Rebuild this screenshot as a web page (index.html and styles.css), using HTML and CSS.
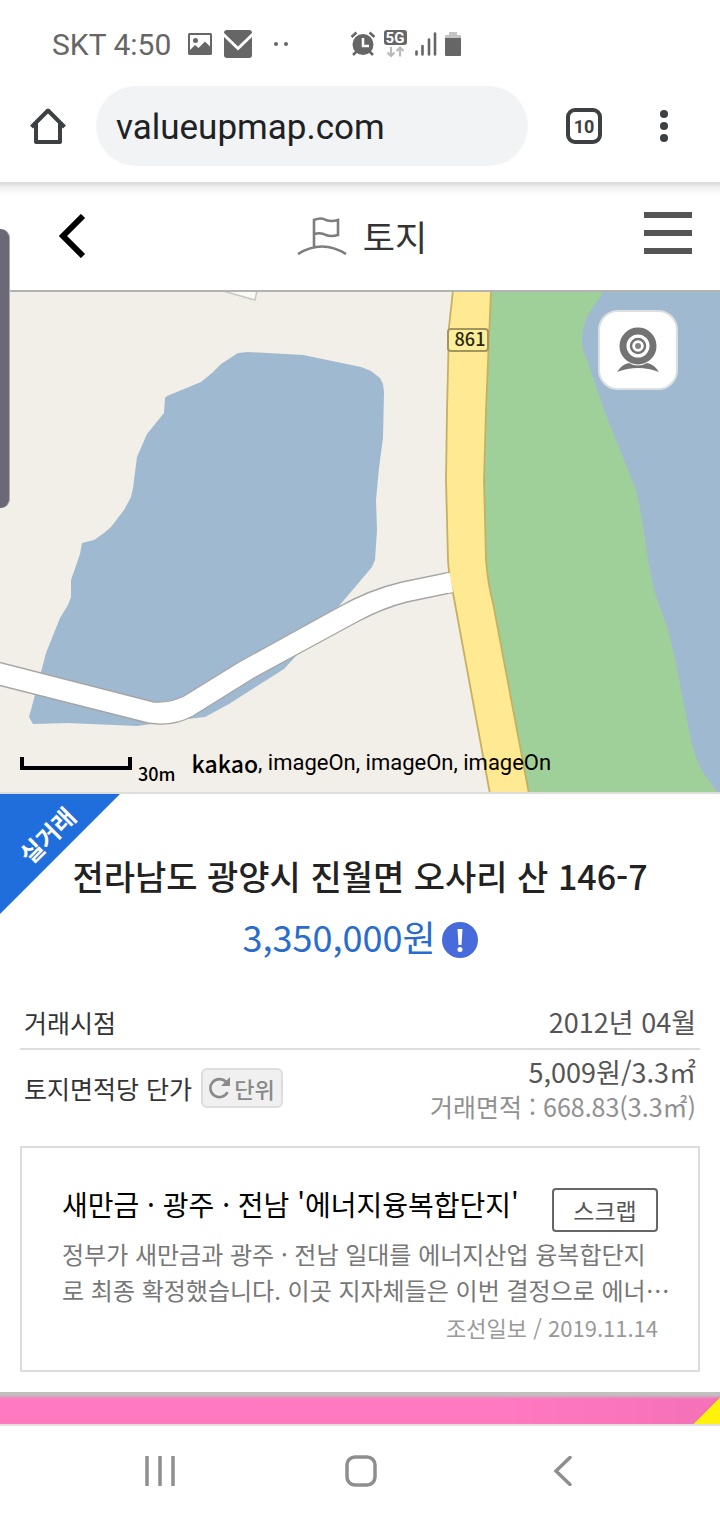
FILE: index.html
```html
<!DOCTYPE html>
<html lang="ko">
<head>
  <meta charset="UTF-8">
  <meta name="viewport" content="width=device-width, initial-scale=1.0">
  <title>토지</title>
  <link rel="stylesheet" href="styles.css">
</head>
<body>

<!-- STATUS BAR -->
<div class="status-bar">
  <span class="carrier">SKT 4:50</span>
  <div class="notice-icons">
    <svg width="24" height="22" viewBox="0 0 24 22"><path fill="#666" fill-rule="evenodd" d="M1.500 0h21a1.500 1.500 0 0 1 1.500 1.500v19a1.500 1.500 0 0 1-1.500 1.500h-21a1.500 1.500 0 0 1-1.500-1.500v-19a1.500 1.500 0 0 1 1.500-1.500zM2 2v15l5-5 3.500 3 6.500-6.500 5 5V2z"/><circle cx="7.500" cy="7.500" r="2.500" fill="#666"/></svg>
    <svg width="28" height="28" viewBox="0 0 28 28"><rect width="28" height="28" rx="3" fill="#666"/><path d="M-1 4l15 14.500L29 4" fill="none" stroke="#fff" stroke-width="3"/></svg>
    <svg class="more-dots" width="14" height="4" viewBox="0 0 14 4"><circle cx="2" cy="2" r="2" fill="#666"/><circle cx="12" cy="2" r="2" fill="#666"/></svg>
  </div>
  <div class="signal-icons">
    <svg width="26" height="26" viewBox="0 0 26 26"><circle cx="13" cy="13.500" r="10.500" fill="#666"/><path d="M1.500 6l5-4.500M24.500 6l-5-4.500M3 24l3.500-3.500M23 24l-3.500-3.500" stroke="#666" stroke-width="2.500"/><path d="M13 7v8h6" fill="none" stroke="#fff" stroke-width="2.500"/></svg>
    <svg width="23" height="28" viewBox="0 0 23 28"><rect width="23" height="15" rx="3" fill="#666"/><text class="five-g" x="11" y="13" text-anchor="middle">5G</text><path d="M7 17v9M3.500 22.500L7 26l3.500-3.500M16 26.500v-9M12.500 21l3.500-3.500 3.500 3.500" fill="none" stroke="#bbb" stroke-width="2.200"/></svg>
    <svg width="22" height="24" viewBox="0 0 22 24"><path d="M1.500 19.500v3M7.500 14v8.500M14 7.500v15M20 1.500v21" stroke="#666" stroke-width="2.600" stroke-linecap="round"/></svg>
    <svg width="16" height="24" viewBox="0 0 16 24"><path d="M4 0h8v3h3a1 1 0 0 1 1 1v3H0V4a1 1 0 0 1 1-1h3z" fill="#c4c4c4"/><path d="M0 6h16v17a1 1 0 0 1-1 1H1a1 1 0 0 1-1-1z" fill="#666"/></svg>
  </div>
</div>

<!-- BROWSER BAR -->
<div class="browser-bar">
  <button type="button" class="icon-button" aria-label="홈">
    <svg width="36" height="36" viewBox="0 0 36 36"><path d="M1.500 19L18 2.500 34.500 19M6 15.500V34h24V15.500" fill="none" stroke="#3c4043" stroke-width="4" stroke-linejoin="round"/></svg>
  </button>
  <input class="url" type="text" value="valueupmap.com" aria-label="주소">
  <button type="button" class="tab-count">10</button>
  <button type="button" class="icon-button" aria-label="더보기">
    <svg width="8" height="32" viewBox="0 0 8 32"><g fill="#3c4043"><circle cx="4" cy="4" r="4"/><circle cx="4" cy="16" r="4"/><circle cx="4" cy="28" r="4"/></g></svg>
  </button>
</div>

<!-- PAGE HEADER -->
<header class="page-header">
  <button type="button" class="icon-button" aria-label="뒤로">
    <svg width="28" height="44" viewBox="0 0 28 44"><path d="M25 2L5 22l20 20" fill="none" stroke="#000" stroke-width="6"/></svg>
  </button>
  <h1>
    <svg width="50" height="38" viewBox="0 0 50 38"><path d="M1 37Q25 22 49 37M17 30V3q7-3 12 0 5 2 12 0v15q-7 2-12 0-5-3-12-1" fill="none" stroke="#7d7d7d" stroke-width="2.600"/></svg>
    토지
  </h1>
  <button type="button" class="icon-button" aria-label="메뉴">
    <svg width="48" height="44" viewBox="0 0 48 44"><path d="M0 3h48M0 21h48M0 39h48" stroke="#555" stroke-width="6"/></svg>
  </button>
</header>

<!-- MAP -->
<div class="map">
  <svg class="map-canvas" viewBox="0 292 720 500" preserveAspectRatio="xMidYMid slice">
    <rect y="292" width="720" height="500" fill="#f2efe8"/>
    <path d="M223 291L255 300L257 291" fill="#fafaf8" stroke="#c8c8c2" stroke-width="1.500"/>
    <!-- lake -->
    <path fill="#9eb9d0" d="M238 353L248 352 303 355 361 367 371 371 380 378 383 384 384 392 383 438 379 468 376 500 377 530 375 560 372 567 339 606 295 657 284 669 229 704 205 717 187 719 137 726 68 723 33 724 29 717 35 695 46 653 60 618 68 605 71 597 71 580 80 554 82 543 94 540 104 533 111 527 124 510 131 497 133 488 137 457 147 434 164 413 165 398 167 396 201 382 212 373 221 364z"/>
    <!-- river and park -->
    <path fill="#9eb9d0" d="M570 292H720V792H570z"/>
    <path fill="#a0d099" d="M470 292H603L588 315Q582 326 582 340 582 350 586 357L604 410 636 490Q642 515 648 560L654 590 668 630Q676 660 681 690L690 735Q694 757 704 774L717 792H510L470 560z"/>
    <!-- small road -->
    <path fill="#fff" stroke="#a5a5a5" stroke-width="1.300" d="M-2 662L154 702Q170 703 184 696L239 662 337 608Q368 590 402 582L460 570V591L407 602Q383 608 357 622L254 678 193 716Q173 727 148 723L-2 685z"/>
    <!-- main road -->
    <path fill="#ffe993" stroke="#c6b061" stroke-width="1.800" d="M453 290L449 327 447 410 446 480 448 560Q449 578 453 593L490 794H529L493 603Q488 585 486 560L484 480 486 410 491 290z"/>
    <path fill="#fff" d="M445 574L450 573 453 592 448 593z"/>
    <rect x="448" y="329" width="40" height="22" rx="3" fill="#fbef9c" stroke="#a4945e" stroke-width="2"/>
    <text class="road-number" x="470" y="346" text-anchor="middle">861</text>
  </svg>
  <button type="button" class="road-view" aria-label="로드뷰">
    <svg width="42" height="46" viewBox="0 0 42 46"><circle cx="21" cy="19" r="15" fill="none" stroke="#737373" stroke-width="7"/><circle cx="21" cy="19" r="7" fill="none" stroke="#737373" stroke-width="2.500"/><circle cx="21" cy="19" r="3" fill="#858585"/><path d="M0 45q5-8 12-9 9 5 18 0 7 1 12 9-21-8-42 0z" fill="#737373"/></svg>
  </button>
  <div class="map-legend">
    <span class="scale-line"></span>
    <span class="scale-text">30m</span>
    <strong class="kakao">kakao</strong>
    <span class="map-source">, imageOn, imageOn, imageOn</span>
  </div>
</div>

<!-- LAND DETAIL -->
<main class="detail">
  <div class="ribbon"><span>실거래</span></div>
  <h2>전라남도 광양시 진월면 오사리 산 146-7</h2>
  <div class="price">
    <p>3,350,000원</p>
    <button type="button" class="icon-button" aria-label="안내">
      <svg width="36" height="36" viewBox="0 0 36 36"><circle cx="18" cy="18" r="18" fill="#486bdc"/><path d="M15.500 7h5l-1 16h-3z" fill="#fff"/><circle cx="18" cy="27.500" r="2.500" fill="#fff"/></svg>
    </button>
  </div>

  <dl class="info">
    <div class="info-row">
      <dt>거래시점</dt>
      <dd>2012년 04월</dd>
    </div>
    <div class="info-row">
      <dt>토지면적당 단가
        <button type="button" class="unit">
          <svg width="22" height="22" viewBox="0 0 22 22"><path d="M18.500 15A9 9 0 1 1 17 5" fill="none" stroke="#8a8a8a" stroke-width="2.600"/><path d="M21 0v9h-9z" fill="#8a8a8a"/></svg>단위
        </button>
      </dt>
      <dd>5,009원/3.3㎡<small>거래면적 : 668.83(3.3㎡)</small></dd>
    </div>
  </dl>

  <article class="news">
    <div class="news-head">
      <h3>새만금 · 광주 · 전남 '에너지융복합단지'</h3>
      <button type="button" class="scrap">스크랩</button>
    </div>
    <p class="news-text">정부가 새만금과 광주 · 전남 일대를 에너지산업 융복합단지<br>로 최종 확정했습니다. 이곳 지자체들은 이번 결정으로 에너⋯</p>
    <p class="news-source">조선일보 / 2019.11.14</p>
  </article>
</main>

<!-- AD -->
<div class="ad"></div>

<!-- SYSTEM NAVIGATION -->
<nav class="system-nav">
  <button type="button" class="icon-button" aria-label="최근 앱">
    <svg width="30" height="30" viewBox="0 0 30 30"><path d="M2 1v28M15 1v28M28 1v28" stroke="#8e8e8e" stroke-width="3.500" stroke-linecap="round"/></svg>
  </button>
  <button type="button" class="icon-button" aria-label="홈 화면">
    <svg width="32" height="32" viewBox="0 0 32 32"><rect x="2" y="2" width="28" height="28" rx="8" fill="none" stroke="#8e8e8e" stroke-width="3.500"/></svg>
  </button>
  <button type="button" class="icon-button" aria-label="뒤로 가기">
    <svg width="18" height="30" viewBox="0 0 18 30"><path d="M16 1.500L2 15l14 13.500" fill="none" stroke="#8e8e8e" stroke-width="3.500" stroke-linecap="round"/></svg>
  </button>
</nav>

<div class="edge-handle"></div>

</body>
</html>
```
FILE: styles.css
```css
* { box-sizing: border-box; }
body { font-family: "Noto Sans CJK KR", sans-serif; margin: 0; background: #fff; color: #222; }
h1, h2, h3, p, dl, dd { margin: 0; font-weight: 400; }
button { font-family: inherit; margin: 0; padding: 0; cursor: pointer; }
svg { display: block; }
.icon-button { border: 0; background: none; }

/* STATUS BAR */
.status-bar { display: flex; align-items: center; height: 88px; padding-left: 52px; font-family: Roboto, sans-serif; }
.carrier { font-size: 30px; color: #666; }
.notice-icons { display: flex; align-items: center; gap: 12px; margin-left: 17px; }
.more-dots { margin-left: 10px; }
.signal-icons { display: flex; align-items: center; gap: 8px; margin-left: 62px; }
.five-g { font: 700 15px Roboto, sans-serif; fill: #fff; }

/* BROWSER BAR */
.browser-bar {
  display: flex;
  align-items: center;
  height: 94px;
  padding: 0 52px 18px 30px;
}
.url {
  flex: 1;
  min-width: 0;
  height: 80px;
  margin: 0 38px 0 30px;
  padding: 2px 20px 0;
  border: 0;
  border-radius: 40px;
  background: #f1f3f4;
  color: #202124;
  font: 35px Roboto, sans-serif;
}
.tab-count {
  width: 36px;
  height: 36px;
  margin-right: 58px;
  border: 4px solid #3c4043;
  border-radius: 9px;
  background: none;
  color: #3c4043;
  font: 700 18px Roboto, sans-serif;
}

/* PAGE HEADER */
.page-header {
  display: flex;
  align-items: center;
  justify-content: space-between;
  height: 110px;
  padding: 0 28px 0 58px;
  border-bottom: 2px solid #b3b3b3;
  background: linear-gradient(#d9d9d9, #f2f2f2 6px, #fff 14px);
}
.page-header h1 { display: flex; align-items: center; gap: 16px; margin-right: 6px; font-size: 35px; line-height: 48px; color: #333; }
.page-header .icon-button:last-child { margin-bottom: 4px; }

/* MAP */
.map { position: relative; height: 502px; border-bottom: 2px solid #ddd; }
.map-canvas { width: 100%; height: 100%; }
.road-number { font: 500 18px "Noto Sans CJK KR", sans-serif; fill: #2d2508; }
.road-view {
  position: absolute;
  top: 18px;
  right: 42px;
  display: flex;
  align-items: center;
  justify-content: center;
  width: 80px;
  height: 80px;
  border: 2px solid #dcdfe2;
  border-radius: 20px;
  background: #fff;
}
.map-legend { position: absolute; left: 20px; bottom: 9px; display: flex; align-items: flex-end; color: #000; }
.scale-line { width: 112px; height: 13px; margin-bottom: 13px; border: 4px solid #000; border-top: 0; }
.scale-text { margin-left: 6px; font-size: 18px; font-weight: 500; line-height: 20px; }
.kakao { margin: 0 0 4px 16px; font-size: 23px; font-weight: 500; line-height: 32px; }
.map-source { margin-bottom: 4px; font: 22px/32px Roboto, sans-serif; }

/* DETAIL */
.detail { position: relative; padding: 54px 20px 20px; }
.ribbon {
  position: absolute;
  top: 0;
  left: 0;
  display: flex;
  align-items: center;
  justify-content: center;
  width: 120px;
  height: 120px;
  padding: 0 26px 38px 0;
  background: #206edc;
  clip-path: polygon(0 0, 100% 0, 0 100%);
}
.ribbon span { color: #fff; font-size: 24px; font-weight: 700; line-height: 28px; white-space: nowrap; transform: rotate(-45deg); }
.detail h2 { font-size: 34px; font-weight: 500; line-height: 56px; text-align: center; }
.price { display: flex; align-items: center; justify-content: center; gap: 6px; margin-top: 6px; color: #286ccf; }
.price p { padding-bottom: 8px; font-size: 36px; line-height: 52px; }

.info { margin-top: 22px; }
.info-row { display: flex; align-items: center; justify-content: space-between; padding: 0 4px; line-height: 36px; }
.info-row + .info-row { border-top: 2px solid #ddd; }
.info-row:first-child { padding-top: 12px; padding-bottom: 8px; }
.info-row:last-child { padding-top: 4px; }
.info dt { display: flex; align-items: center; gap: 9px; font-size: 25px; color: #333; }
.info dd { font-size: 27px; color: #555; text-align: right; }
.info small { display: block; font-size: 25px; line-height: 32px; color: #909090; }
.unit {
  display: flex;
  align-items: center;
  justify-content: center;
  gap: 3px;
  width: 82px;
  height: 40px;
  border: 2px solid #ddd;
  border-radius: 6px;
  background: #f0f0f0;
  color: #8a8a8a;
  font-size: 22px;
  font-weight: 500;
}

/* NEWS */
.news { margin-top: 24px; padding: 40px 40px 24px; border: 2px solid #dcdcdc; }
.news-head { display: flex; justify-content: space-between; height: 48px; }
.news h3 { font-size: 28px; line-height: 32px; color: #000; }
.scrap { width: 106px; height: 44px; border: 2px solid #666; border-radius: 4px; background: #fff; color: #555; font-size: 23px; line-height: 36px; }
.news-text { font-size: 24px; line-height: 36px; color: #777; white-space: nowrap; }
.news-source { font-size: 22px; line-height: 38px; color: #999; text-align: right; }

/* AD */
.ad {
  height: 32px;
  background:
    linear-gradient(#c0c0c0 3px, rgba(192, 192, 192, 0) 7px),
    linear-gradient(135deg, transparent 50%, #fff20a 51%) right bottom / 27px 27px no-repeat,
    linear-gradient(90deg, #ff78c0 70%, #f672b8 95%);
}

/* SYSTEM NAVIGATION */
.system-nav {
  display: flex;
  align-items: center;
  justify-content: space-between;
  height: 96px;
  padding: 0 148px 4px 145px;
  border-top: 2px solid #e3e0e2;
}
.system-nav .icon-button:nth-child(2) { margin-right: 8px; }

.edge-handle {
  position: absolute;
  top: 229px;
  left: 0;
  width: 10px;
  height: 279px;
  border-right: 1px solid #aaa;
  border-radius: 0 9px 9px 0;
  background: #6c6976;
}
```
